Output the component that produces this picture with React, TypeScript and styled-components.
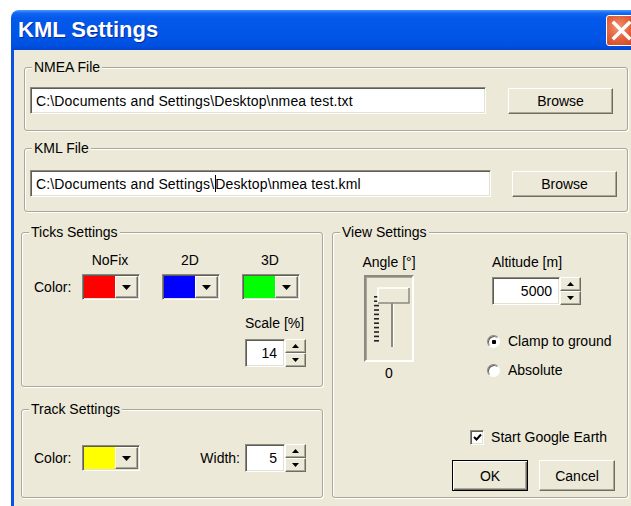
import styled, { createGlobalStyle, css } from 'styled-components'

const GlobalStyle = createGlobalStyle`
    html, body {
        margin: 0;
        padding: 0;
        background: #fff;
        overflow: hidden;
    }
    body {
        font-family: "Liberation Sans", Arial, sans-serif;
        font-size: 14px;
        line-height: 16px;
        color: #000;
    }
`

const Window = styled.div`
    width: 631px;
    margin: 10px 0 0 11px;
`

const TitleBar = styled.div`
    height: 40px;
    box-sizing: border-box;
    display: flex;
    align-items: center;
    justify-content: space-between;
    padding: 0 5px 0 7px;
    border-radius: 8px 8px 0 0;
    background: linear-gradient(to bottom, #4A9BFF 0px, #1268F2 3px, #0459EC 8px, #0055E6 28px, #0050DF 36px, #0046D2 40px);
`

const Caption = styled.div`
    font-family: "Liberation Sans", Arial, sans-serif;
    font-weight: bold;
    font-size: 22px;
    line-height: 24px;
    color: #fff;
    text-shadow: 1px 1px 0 #0A2A9A;
`

const CloseButton = styled.div`
    width: 31px;
    height: 31px;
    box-sizing: border-box;
    border: 1px solid #fff;
    border-radius: 3px;
    background: radial-gradient(circle at 40% 40%, #F3926C 0%, #E2603A 50%, #C8431D 100%);
    display: flex;
    align-items: center;
    justify-content: center;
`

const Body = styled.div`
    height: 470px;
    box-sizing: border-box;
    background: #ECE9D8;
    border-left: 3px solid #0B52E3;
    border-right: 3px solid #0B52E3;
    padding: 9px 11px 0 7px;
`

// group box with etched frame
const Group = styled.fieldset<{ $ml?: number; $mt?: number }>`
    margin: ${p => `${p.$mt ?? 0}px 0 0 ${p.$ml ?? 0}px`};
    padding: 0;
    min-width: 0;
    border: 1px solid #ACA899;
    border-radius: 3px;
    box-shadow: inset 1px 1px 0 #fff, 1px 1px 0 #fff;
    display: flex;
    flex-direction: column;
`

const Legend = styled.legend`
    margin-left: 7px;
    padding: 0 2px;
    line-height: 16px;
    background: #ECE9D8;
`

const FileRow = styled.div<{ $pad: string; $gap: number }>`
    display: flex;
    align-items: center;
    padding: ${p => p.$pad};
    gap: ${p => p.$gap}px;
`

const sunken = css`
    border: 1px solid;
    border-color: #8C8A7E #fff #fff #8C8A7E;
    box-shadow: inset 1px 1px 0 #5E5D55, inset -1px -1px 0 #E4E1D3;
`

const raised = css`
    border: 1px solid;
    border-color: #fff #6F6D62 #6F6D62 #fff;
    box-shadow: inset -1px -1px 0 #ACA899;
    background: #ECE9D8;
`

const Field = styled.div`
    flex: 1;
    height: 27px;
    box-sizing: border-box;
    display: flex;
    align-items: center;
    padding: 0 5px;
    background: #fff;
    letter-spacing: 0.15px;
    white-space: nowrap;
    ${sunken}
`

const Caret = styled.span`
    display: inline-block;
    width: 1px;
    height: 17px;
    margin: 0 -1px 0 1px;
    background: #000;
`

const PushButton = styled.button<{ $w: number; $h: number; $default?: boolean }>`
    width: ${p => p.$w}px;
    height: ${p => p.$h}px;
    box-sizing: border-box;
    padding: 0;
    font: inherit;
    color: #000;
    ${raised}
    ${p => p.$default && css`
        border: 1px solid #000;
        box-shadow: inset 1px 1px 0 #fff, inset -1px -1px 0 #6F6D62, inset -2px -2px 0 #ACA899;
    `}
`

const Lower = styled.div`
    display: grid;
    grid-template-columns: 302px 1fr;
    column-gap: 9px;
    margin-top: 12px;
`

const LeftColumn = styled.div`
    display: flex;
    flex-direction: column;
    gap: 14px;
`

const TicksBody = styled.div`
    padding: 12px 0 19px 12px;
`

const ColorGrid = styled.div`
    display: grid;
    grid-template-columns: 48px repeat(3, 80px);
    grid-template-rows: 16px 26px;
    row-gap: 6px;
    align-items: center;
`

const Heading = styled.div`
    width: 56px;
    text-align: center;
`

const Text = styled.span`
    white-space: nowrap;
`

const ScaleBlock = styled.div`
    display: flex;
    flex-direction: column;
    gap: 8px;
    margin: 15px 0 0 211px;
`

const Combo = styled.div`
    width: 58px;
    height: 26px;
    box-sizing: border-box;
    display: flex;
    padding: 1px;
    ${sunken}
`

const Swatch = styled.div<{ $color: string }>`
    flex: 1;
    background: ${p => p.$color};
`

const DropButton = styled.div`
    width: 23px;
    box-sizing: border-box;
    display: flex;
    align-items: center;
    justify-content: center;
    ${raised}
`

const Spin = styled.div<{ $w: number }>`
    width: ${p => p.$w}px;
    height: 28px;
    display: flex;
`

const SpinField = styled.div`
    flex: 1;
    box-sizing: border-box;
    display: flex;
    align-items: center;
    justify-content: flex-end;
    padding-right: 7px;
    background: #fff;
    ${sunken}
`

const SpinButtons = styled.div`
    width: 21px;
    display: flex;
    flex-direction: column;
`

const SpinButton = styled.div`
    flex: 1;
    box-sizing: border-box;
    display: flex;
    align-items: center;
    justify-content: center;
    ${raised}
`

const TrackBody = styled.div`
    display: flex;
    align-items: center;
    padding: 27px 16px 25px 12px;
`

const RowLabel = styled.div<{ $w?: number }>`
    width: ${p => (p.$w ? `${p.$w}px` : 'auto')};
    white-space: nowrap;
`

const WidthLabel = styled.div`
    margin: 0 5px 0 auto;
`

const ViewBody = styled.div`
    flex: 1;
    display: flex;
    flex-direction: column;
    padding: 14px 12px 6px 14px;
`

const ViewTop = styled.div`
    display: flex;
    gap: 61px;
`

const AngleColumn = styled.div`
    width: 84px;
    display: flex;
    flex-direction: column;
    align-items: center;
    gap: 5px;
`

const SliderBox = styled.div`
    width: 50px;
    height: 87px;
    box-sizing: border-box;
    border: 2px solid;
    border-color: #8C8A7E #fff #fff #8C8A7E;
    box-shadow: inset 1px 1px 0 #ACA899;
`

const SliderValue = styled.div`
    margin-top: -2px;
`

const AltitudeColumn = styled.div`
    display: flex;
    flex-direction: column;
    align-items: flex-start;
`

const AltitudeSpin = styled.div`
    margin: 7px 0 28px;
`

const RadioRow = styled.div<{ $mt?: number }>`
    display: flex;
    align-items: center;
    gap: 8px;
    margin: ${p => p.$mt ?? 0}px 0 0 -5px;
`

const Radio = styled.span`
    width: 13px;
    height: 13px;
    box-sizing: border-box;
    border-radius: 50%;
    background: #fff;
    border: 1px solid;
    border-color: #8C8A7E #fff #fff #8C8A7E;
    box-shadow: inset 1px 1px 0 #5E5D55;
    display: flex;
    align-items: center;
    justify-content: center;
`

const Dot = styled.span`
    width: 4px;
    height: 4px;
    border-radius: 1px;
    background: #000;
    margin: 1px 0 0 1px;
`

const ViewBottom = styled.div`
    margin-top: auto;
    display: flex;
    flex-direction: column;
    align-items: flex-end;
    gap: 15px;
`

const CheckRow = styled.div`
    display: flex;
    align-items: center;
    gap: 7px;
    margin-right: 8px;
`

const CheckBox = styled.span`
    width: 14px;
    height: 15px;
    box-sizing: border-box;
    background: #fff;
    display: flex;
    align-items: center;
    justify-content: center;
    ${sunken}
`

const ButtonRow = styled.div`
    display: flex;
    gap: 11px;
`

const DownArrow = ({ w = 9 }: { w?: number }) => (
    <svg width={w} height={Math.ceil(w / 2)} viewBox={`0 0 ${w} ${Math.ceil(w / 2)}`}>
        <polygon points={`0,0 ${w},0 ${w / 2},${Math.ceil(w / 2)}`} fill="#000" />
    </svg>
)

const UpArrow = ({ w = 7 }: { w?: number }) => (
    <svg width={w} height={Math.ceil(w / 2)} viewBox={`0 0 ${w} ${Math.ceil(w / 2)}`}>
        <polygon points={`0,${Math.ceil(w / 2)} ${w},${Math.ceil(w / 2)} ${w / 2},0`} fill="#000" />
    </svg>
)

const ColorCombo = ({ color }: { color: string }) => (
    <Combo>
        <Swatch $color={color} />
        <DropButton><DownArrow /></DropButton>
    </Combo>
)

const SpinBox = ({ value, width }: { value: string; width: number }) => (
    <Spin $w={width}>
        <SpinField>{value}</SpinField>
        <SpinButtons>
            <SpinButton><UpArrow /></SpinButton>
            <SpinButton><DownArrow w={7} /></SpinButton>
        </SpinButtons>
    </Spin>
)

// vertical trackbar: ticks on the left, thumb at the top
const AngleSlider = () => (
    <SliderBox>
        <svg width="46" height="83" viewBox="0 0 46 83">
            {Array.from({ length: 11 }, (_, i) => (
                <rect key={i} x="8" y={19 + i * 4.4} width="5" height="1.6" fill="#222" />
            ))}
            <rect x="25" y="26" width="2" height="44" fill="#8C8A7E" />
            <rect x="27" y="26" width="1" height="44" fill="#fff" />
            <rect x="12" y="11" width="31" height="15" fill="#ECE9D8" />
            <path d="M12 26 V11 H43" stroke="#fff" strokeWidth="1.5" fill="none" />
            <path d="M12 26 H43 V11" stroke="#8C8A7E" strokeWidth="1.5" fill="none" />
        </svg>
    </SliderBox>
)

const App = () => {
    return (
        <>
            <GlobalStyle />
            <Window>
                <TitleBar>
                    <Caption>KML Settings</Caption>
                    <CloseButton>
                        <svg width="29" height="29" viewBox="0 0 29 29">
                            <path d="M7 7 L22 22 M22 7 L7 22" stroke="#fff" strokeWidth="3.5" strokeLinecap="square" />
                        </svg>
                    </CloseButton>
                </TitleBar>
                <Body>
                    <Group $ml={3}>
                        <Legend>NMEA File</Legend>
                        <FileRow $pad="12px 14px 16px 5px" $gap={22}>
                            <Field>C:\Documents and Settings\Desktop\nmea test.txt</Field>
                            <PushButton $w={105} $h={26}>Browse</PushButton>
                        </FileRow>
                    </Group>

                    <Group $ml={3} $mt={9}>
                        <Legend>KML File</Legend>
                        <FileRow $pad="14px 10px 14px 5px" $gap={21}>
                            <Field>C:\Documents and Settings\<Caret />Desktop\nmea test.kml</Field>
                            <PushButton $w={105} $h={26}>Browse</PushButton>
                        </FileRow>
                    </Group>

                    <Lower>
                        <LeftColumn>
                            <Group>
                                <Legend>Ticks Settings</Legend>
                                <TicksBody>
                                    <ColorGrid>
                                        <span />
                                        <Heading>NoFix</Heading>
                                        <Heading>2D</Heading>
                                        <Heading>3D</Heading>
                                        <Text>Color:</Text>
                                        <ColorCombo color="#FF0000" />
                                        <ColorCombo color="#0000FF" />
                                        <ColorCombo color="#00FF00" />
                                    </ColorGrid>
                                    <ScaleBlock>
                                        <Text>Scale [%]</Text>
                                        <SpinBox value="14" width={61} />
                                    </ScaleBlock>
                                </TicksBody>
                            </Group>

                            <Group>
                                <Legend>Track Settings</Legend>
                                <TrackBody>
                                    <RowLabel $w={48}>Color:</RowLabel>
                                    <ColorCombo color="#FFFF00" />
                                    <WidthLabel>Width:</WidthLabel>
                                    <SpinBox value="5" width={61} />
                                </TrackBody>
                            </Group>
                        </LeftColumn>

                        <Group>
                            <Legend>View Settings</Legend>
                            <ViewBody>
                                <ViewTop>
                                    <AngleColumn>
                                        <Text>Angle [°]</Text>
                                        <AngleSlider />
                                        <SliderValue>0</SliderValue>
                                    </AngleColumn>
                                    <AltitudeColumn>
                                        <Text>Altitude [m]</Text>
                                        <AltitudeSpin>
                                            <SpinBox value="5000" width={89} />
                                        </AltitudeSpin>
                                        <RadioRow>
                                            <Radio><Dot /></Radio>
                                            <Text>Clamp to ground</Text>
                                        </RadioRow>
                                        <RadioRow $mt={13}>
                                            <Radio />
                                            <Text>Absolute</Text>
                                        </RadioRow>
                                    </AltitudeColumn>
                                </ViewTop>
                                <ViewBottom>
                                    <CheckRow>
                                        <CheckBox>
                                            <svg width="9" height="9" viewBox="0 0 9 9">
                                                <path d="M1 4 L3.5 6.5 L8 1.5" stroke="#000" strokeWidth="2" fill="none" />
                                            </svg>
                                        </CheckBox>
                                        <Text>Start Google Earth</Text>
                                    </CheckRow>
                                    <ButtonRow>
                                        <PushButton $w={76} $h={31} $default>OK</PushButton>
                                        <PushButton $w={76} $h={31}>Cancel</PushButton>
                                    </ButtonRow>
                                </ViewBottom>
                            </ViewBody>
                        </Group>
                    </Lower>
                </Body>
            </Window>
        </>
    )
}

export default App
